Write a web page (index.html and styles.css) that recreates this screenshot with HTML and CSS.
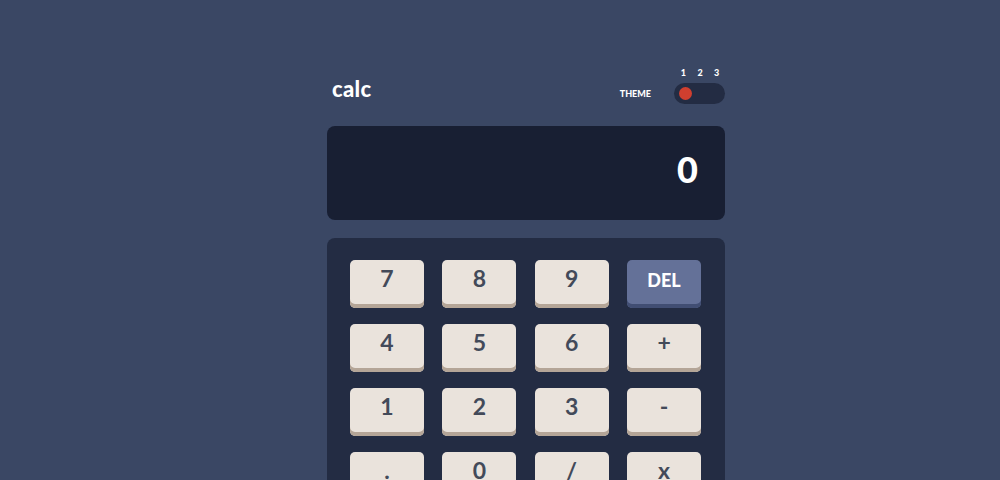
FILE: index.html
```html
<!DOCTYPE html>
<html lang="en">
<head>
<meta charset="utf-8">
<title>calc</title>
<link rel="stylesheet" href="styles.css">
</head>
<body>
<main class="page">
  <div class="calc">
    <header class="top">
      <h1 class="logo">calc</h1>
      <div class="theme">
        <span class="theme-label">THEME</span>
        <div class="switch">
          <div class="switch-nums"><span>1</span><span>2</span><span>3</span></div>
          <div class="switch-track"><span class="switch-dot"></span></div>
        </div>
      </div>
    </header>
    <div class="screen"><span class="screen-value">0</span></div>
    <div class="keypad">
      <button class="key">7</button>
      <button class="key">8</button>
      <button class="key">9</button>
      <button class="key key-alt key-word">DEL</button>
      <button class="key">4</button>
      <button class="key">5</button>
      <button class="key">6</button>
      <button class="key">+</button>
      <button class="key">1</button>
      <button class="key">2</button>
      <button class="key">3</button>
      <button class="key">-</button>
      <button class="key">.</button>
      <button class="key">0</button>
      <button class="key">/</button>
      <button class="key">x</button>
      <button class="key key-alt key-word key-wide">RESET</button>
      <button class="key key-eq key-word key-wide">=</button>
    </div>
  </div>
</main>
</body>
</html>
```

FILE: styles.css
```css
html, body {
  margin: 0;
  padding: 0;
  background: #3a4764;
}

body {
  font-family: "Lato", "Open Sans", sans-serif;
  color: #ffffff;
}

.page {
  width: 1052px;
  min-height: 660px;
  box-sizing: border-box;
  padding-top: 68px;
  display: flex;
  justify-content: center;
  align-items: flex-start;
}

.calc {
  width: 398px;
}

.top {
  display: flex;
  justify-content: space-between;
  align-items: flex-end;
  padding-left: 5px;
}

.logo {
  margin: 0 0 4px;
  font-size: 22px;
  line-height: 22px;
  font-weight: 900;
  letter-spacing: 0.3px;
}

.theme {
  display: flex;
  align-items: flex-end;
  gap: 23px;
}

.theme-label {
  font-size: 9px;
  font-weight: 900;
  line-height: 21px;
}

.switch {
  width: 51px;
}

.switch-nums {
  display: grid;
  grid-template-columns: repeat(3, 1fr);
  font-size: 9px;
  font-weight: 900;
  line-height: 10px;
  text-align: center;
  margin-bottom: 5px;
  padding-left: 1px;
}

.switch-track {
  height: 21px;
  box-sizing: border-box;
  padding: 4px;
  border-radius: 11px;
  background: #232c43;
  display: flex;
  align-items: center;
}

.switch-dot {
  width: 13px;
  height: 13px;
  border-radius: 50%;
  background: #d03f2f;
  margin-left: 1px;
}

.screen {
  margin-top: 22px;
  height: 94px;
  border-radius: 8px;
  background: #181f33;
  display: flex;
  align-items: center;
  justify-content: flex-end;
  padding: 0 27px 8px;
  box-sizing: border-box;
}

.screen-value {
  font-size: 36px;
  font-weight: 900;
  line-height: 1;
}

.keypad {
  margin-top: 18px;
  border-radius: 8px;
  background: #232c43;
  padding: 22px 24px 24px 23px;
  display: grid;
  grid-template-columns: repeat(4, 1fr);
  column-gap: 18.5px;
  row-gap: 16px;
}

.key {
  height: 48px;
  border: 0;
  border-radius: 5px;
  background: #eae3dc;
  box-shadow: inset 0 -4px 0 #b4a597;
  color: #434a59;
  font-family: "Lato", "Open Sans", sans-serif;
  font-size: 23px;
  font-weight: 700;
  padding: 0 0 12px;
  margin: 0;
}

.key-word {
  font-size: 18px;
  font-weight: 900;
  padding-bottom: 9px;
}

.key-alt {
  background: #647198;
  box-shadow: inset 0 -4px 0 #414e73;
  color: #ffffff;
}

.key-eq {
  background: #d03f2f;
  box-shadow: inset 0 -4px 0 #93261a;
  color: #ffffff;
}

.key-wide {
  grid-column: span 2;
}
```
